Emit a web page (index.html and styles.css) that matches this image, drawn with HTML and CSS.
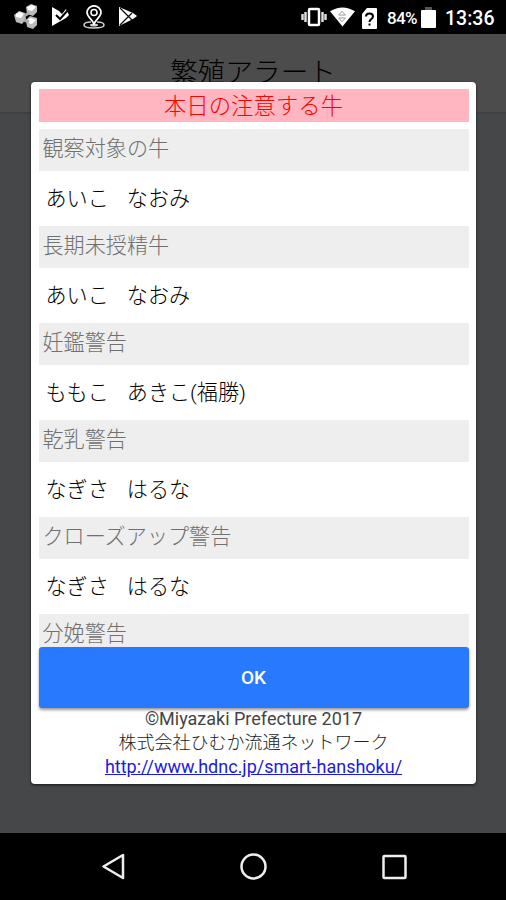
FILE: index.html
```html
<!DOCTYPE html>
<html lang="ja">
<head>
    <meta charset="UTF-8">
    <meta name="viewport" content="width=device-width, initial-scale=1.0">
    <title>繁殖アラート</title>
    <link rel="stylesheet" href="styles.css">
</head>
<body>
    <!-- Status Bar -->
    <div class="status-bar">
        <div class="status-left">
            <svg class="icon-hex" width="26" height="28" viewBox="0 0 26 28">
                <path fill="#bbb" d="M1 12l5-4 6 2 1 6-4 5-6-2zM13 4l5-3 6 2v6l-4 4-6-2zM13 17l4-4 7 2v7l-4 4-6-2z"/>
                <path fill="#fff" d="M3 11l4-2 4 2-3 4-5-1zM14 4l5-2 4 2-4 4-4-1zM14 17l4-2 5 2-4 4-4-1z"/>
                <path stroke="#aaa" stroke-width="3" d="M11 13l5-3M11 17l5 2"/>
            </svg>
            <svg class="icon-check" width="19" height="22" viewBox="0 0 19 22">
                <path fill="#fff" d="M1 1l7 4 3 3 4-5 3 6-3 3L1 20z"/>
                <path fill="none" stroke="#000" stroke-width="2" d="M5 9l4 4 8-9"/>
            </svg>
            <svg class="icon-pin" width="22" height="24" viewBox="0 0 22 24">
                <path fill="none" stroke="#ccc" stroke-width="1.6" d="M8 17c-4 0-7 1-7 3 0 4 20 4 20 0 0-2-3-3-7-3"/>
                <ellipse cx="11" cy="20" rx="4" ry="1.5" fill="#ccc"/>
                <path fill="none" stroke="#fff" stroke-width="1.7" d="M11 19C9 14 4 12 4 7.500a7 6.700 0 0 1 14 0C18 12 13 14 11 19z"/>
                <circle cx="11" cy="7.500" r="3" fill="none" stroke="#fff" stroke-width="1.600"/>
            </svg>
            <svg class="icon-play" width="20" height="22" viewBox="0 0 20 22">
                <path fill="#fff" d="M1 1l14 6 4 3-4 3L1 20z"/>
                <path fill="none" stroke="#111" stroke-width="1.300" d="M2 2l12 12M2 19L14 7"/>
            </svg>
        </div>
        <div class="status-right">
            <svg class="icon-vibrate" width="26" height="20" viewBox="0 0 26 20">
                <path fill="none" stroke="#ddd" stroke-width="2.500" d="M1.500 7v6M4.500 5v10M21.500 5v10M24.500 7v6"/>
                <rect x="8" y="2" width="10" height="16" rx="1" fill="none" stroke="#fff" stroke-width="2.500"/>
            </svg>
            <svg class="icon-wifi" width="25" height="20" viewBox="0 0 26 20">
                <path fill="#fff" d="M0 4Q13-4 26 4L13 20z"/>
                <path fill="none" stroke="#999" d="M9 8l3.500-4L16 8zM9 11l3.500 4L16 11z"/>
            </svg>
            <svg class="icon-sim" width="15" height="21" viewBox="0 0 15 21">
                <path fill="#fff" d="M5 0h9q1 0 1 1v19q0 1-1 1H1q-1 0-1-1V6z"/>
                <path fill="none" stroke="#000" stroke-width="2" d="M4 8.500c0-4 7-4 7 0 0 2.500-3.500 2.500-3.500 5.500M7.500 15.500v2"/>
            </svg>
            <span class="battery-text">84%</span>
            <svg class="icon-battery" width="15" height="21" viewBox="0 0 15 21">
                <path fill="#555" d="M4 0h7v3H4z"/>
                <path fill="#fff" d="M0 4q0-1 1-1h13q1 0 1 1v16q0 1-1 1H1q-1 0-1-1z"/>
            </svg>
            <span class="clock">13:36</span>
        </div>
    </div>

    <!-- Page behind the dialog -->
    <div class="page">
        <div class="page-header">繁殖アラート</div>

        <!-- Alert Dialog -->
        <div class="dialog">
            <h1>本日の注意する牛</h1>
            <div class="alert-list">
                <h2>観察対象の牛</h2>
                <p><span>あいこ</span><span>なおみ</span></p>
                <h2>長期未授精牛</h2>
                <p><span>あいこ</span><span>なおみ</span></p>
                <h2>妊鑑警告</h2>
                <p><span>ももこ</span><span>あきこ(福勝)</span></p>
                <h2>乾乳警告</h2>
                <p><span>なぎさ</span><span>はるな</span></p>
                <h2>クローズアップ警告</h2>
                <p><span>なぎさ</span><span>はるな</span></p>
                <h2>分娩警告</h2>
            </div>
            <button class="ok-button">OK</button>
            <div class="credit">
                <div class="copyright">&copy;Miyazaki Prefecture 2017</div>
                <div class="company">株式会社ひむか流通ネットワーク</div>
                <a href="http://www.hdnc.jp/smart-hanshoku/">http://www.hdnc.jp/smart-hanshoku/</a>
            </div>
        </div>
    </div>

    <!-- Navigation Bar -->
    <div class="nav-bar">
        <svg width="28" height="28" viewBox="0 0 28 28"><path d="M25 2v23L5.500 13.500z"/></svg>
        <svg width="28" height="28" viewBox="0 0 28 28"><circle cx="14.500" cy="13.500" r="12"/></svg>
        <svg width="28" height="28" viewBox="0 0 28 28"><rect x="3.500" y="3" width="22" height="22" rx="1"/></svg>
    </div>
</body>
</html>
```
FILE: styles.css
```css
* {
    margin: 0;
    padding: 0;
    box-sizing: border-box;
}

body {
    width: 506px;
    height: 900px;
    overflow: hidden;
    display: flex;
    flex-direction: column;
    background: #000;
    font-family: Roboto, "Noto Sans CJK JP", sans-serif;
    font-weight: 300;
}

/* Status Bar */
.status-bar {
    height: 34px;
    padding: 0 11px 0 13px;
    display: flex;
    justify-content: space-between;
    color: #fff;
}

.status-left, .status-right {
    display: flex;
    align-items: center;
}

.icon-check {
    margin-left: 12px;
}

.icon-pin {
    margin-left: 13px;
}

.icon-play {
    margin-left: 13px;
}

.icon-wifi {
    margin-left: 3px;
}

.icon-sim {
    margin: 2px 0 0 7px;
}

.battery-text {
    margin: 2px 0 0 10px;
    width: 31px;
    font-size: 17px;
    font-weight: 500;
    letter-spacing: -0.7px;
    white-space: nowrap;
}

.icon-battery {
    margin-left: 3px;
}

.clock {
    margin: 3px 0 0 9px;
    width: 50px;
    font-size: 19.5px;
    font-weight: 500;
    white-space: nowrap;
}

/* Page */
.page {
    position: relative;
    height: 799px;
    background: #464749;
}

.page-header {
    height: 80px;
    background: #4c4c4c;
    border-bottom: 2px solid #3f4041;
    color: #000;
    font-size: 27.7px;
    line-height: 77px;
    text-align: center;
}

/* Dialog */
.dialog {
    position: absolute;
    top: 48px;
    left: 31px;
    width: 445px;
    height: 702px;
    padding: 7px 7.5px;
    background: #fff;
    border-radius: 4px;
    box-shadow: 0 1px 3px rgba(0, 0, 0, 0.7);
}

.dialog h1 {
    height: 33px;
    background: #ffb6c1;
    color: #ff0000;
    font-size: 22.4px;
    font-weight: 300;
    line-height: 35px;
    text-align: center;
}

.alert-list {
    height: 518px;
    margin-top: 7px;
    overflow: hidden;
}

.alert-list h2 {
    height: 42px;
    padding-left: 4px;
    background: #eee;
    color: #707070;
    font-size: 21.1px;
    font-weight: 300;
    line-height: 39px;
}

.alert-list p {
    display: flex;
    gap: 18px;
    height: 55px;
    padding-left: 7px;
    color: #000;
    font-size: 21.1px;
    line-height: 55px;
}

.ok-button {
    display: block;
    width: 100%;
    height: 61px;
    border: none;
    border-radius: 3px;
    background: #2979ff;
    box-shadow: 0 2px 3px rgba(0, 0, 0, 0.4);
    color: #fff;
    font-family: Roboto, sans-serif;
    font-size: 19px;
    font-weight: 500;
}

.credit {
    color: #222;
    font-size: 18px;
    text-align: center;
}

.credit .copyright {
    font-weight: 400;
    line-height: 21px;
    color: #444;
}

.credit .company {
    line-height: 28px;
}

.credit a {
    display: block;
    font-weight: 400;
    line-height: 19px;
    color: #1a1ae6;
}

/* Navigation Bar */
.nav-bar {
    height: 67px;
    padding: 0 98px;
    display: flex;
    justify-content: space-between;
    align-items: center;
}

.nav-bar svg {
    fill: none;
    stroke: #eee;
    stroke-width: 2.5;
    stroke-linejoin: round;
}
```
